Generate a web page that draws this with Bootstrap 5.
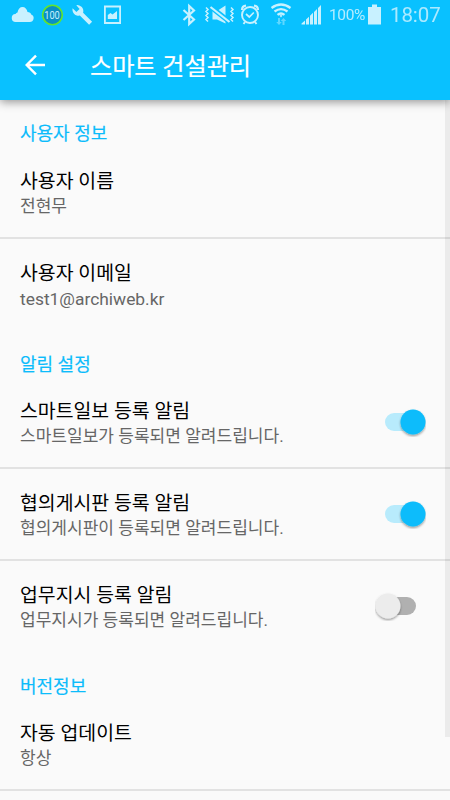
<!DOCTYPE html>
<html lang="ko">
<head>
<meta charset="utf-8">
<meta name="viewport" content="width=device-width, initial-scale=1">
<title>스마트 건설관리</title>
<link href="https://cdn.jsdelivr.net/npm/bootstrap@5.3.0/dist/css/bootstrap.min.css" rel="stylesheet">
<style>
  :root { --sky: #09c1ff; }
  body { font-family: Roboto, "Noto Sans CJK KR", sans-serif; background: #fafafa; height: 800px; line-height: 1; }
  .top-area { background: var(--sky); height: 100px; box-shadow: 0 2px 9px rgba(0,0,0,.42); z-index: 2; }
  .status-bar { height: 31px; color: #c8f1ff; }
  .status-bar svg { display: block; flex: none; }
  .status-text { white-space: nowrap; }
  .pct { font-size: 15.5px; width: 37px; letter-spacing: -.35px; opacity: .9; }
  .clock { font-size: 20.5px; letter-spacing: -.1px; opacity: .85; }
  .app-bar { height: 69px; }
  .app-title { font-size: 24.2px; font-weight: 400; letter-spacing: -.1px; padding-top: 5px; -webkit-text-stroke: .2px; }
  .section-label { height: 48px; padding: 23px 20px 0; font-size: 18px; line-height: 25px; font-weight: 400; color: #0cbcfb; -webkit-text-stroke: .2px; }
  .first-label { height: 47px; padding-top: 21px; }
  .pref { height: 90px; padding: 0 24px 0 20px; }
  .pref.divided { height: 92px; border-bottom: 2px solid #e2e2e2; }
  .pref-title { font-size: 19.4px; line-height: 26px; color: #000; margin-top: 22px; }
  .pref-sub { font-size: 17.05px; line-height: 22px; color: #666; }
  .pref-mail { font-size: 17.4px; line-height: 24px; }
  .toggle { width: 51px; height: 30px; }
  .scroll-thumb { right: 0; top: 100px; width: 5px; height: 637px; background: rgba(0,0,0,.06); z-index: 1; }
</style>
<script src="https://cdn.jsdelivr.net/npm/bootstrap@5.3.0/dist/js/bootstrap.bundle.min.js"></script>
</head>
<body class="overflow-hidden position-relative">
<svg width="0" height="0" class="position-absolute">
  <defs>
    <filter id="knob" x="-30%" y="-30%" width="160%" height="170%"><feDropShadow dx="0" dy="1.5" stdDeviation="1.1" flood-opacity=".4"/></filter>
    <symbol id="on" viewBox="0 0 51 30"><rect x="10" y="6" width="31" height="18" rx="9" fill="#b8ebfc"/><circle cx="38" cy="15" r="12.5" fill="#0abcfb" filter="url(#knob)"/></symbol>
    <symbol id="off" viewBox="0 0 51 30"><rect x="10" y="6" width="31" height="18" rx="9" fill="#b0b0b0"/><circle cx="13" cy="15" r="12.5" fill="#ececec" filter="url(#knob)"/></symbol>
  </defs>
</svg>
<header class="top-area position-relative">
  <div class="status-bar d-flex align-items-center">
      <svg width="329" height="31" viewBox="0 0 329 31" fill="currentColor">
        <path d="M16 22a4 4 0 0 1-.5-8 4 4 0 0 1 2-1.500C18 9 20 7 22.500 7s4.500 2 5 5c2 0 3.500 1 3.700 2.500A3.900 3.900 0 0 1 29.500 22z"/>
        <circle cx="52.500" cy="15" r="9.800" fill="#0b8fc4" stroke="#63e52c" stroke-width="1.600"/>
        <text x="52" y="18.900" font-size="11" text-anchor="middle" textLength="15.500" lengthAdjust="spacingAndGlyphs">100</text>
        <path d="M76.300 5.200a6 6 0 0 1 6.800 7.600l9 9-3 3-9.300-9.300a6 6 0 0 1-7.200-7.200l3.800 3.600 3.200-3z"/>
        <path fill-rule="evenodd" d="M104 5.500h17V24h-17zM105.800 7.500v14.500h13.400V7.500z"/>
        <path d="M107.800 19v-4l2.700-2 2 1.500 4.500-3.500V19z"/>
        <path d="M183.500 10l10.500 9.500-4.800 4.500V6l4.800 4.500L183.500 20" fill="none" stroke="currentColor" stroke-width="2.200"/>
        <path d="M212.500 11h4.500L225.500 5.500v18L217 19.500h-4.500z"/>
        <path d="M209.500 6l21 16.500" stroke="#09c1ff" stroke-width="5"/>
        <path d="M210.500 7l19 15" stroke="currentColor" stroke-width="2.200"/>
        <path d="M206 7.500l2 2-2 2 2 2-2 2 2 2-2 2 2 2M231 7.500l2 2-2 2 2 2-2 2 2 2-2 2 2 2" fill="none" stroke="currentColor" stroke-width="1.500"/>
        <g fill="none" stroke="currentColor">
          <circle cx="250" cy="15" r="8" stroke-width="1.900"/>
          <path d="M246 14l3.300 3 4.500-4.500" stroke-width="1.700"/>
          <path d="M242 10q0-4 4-4.300M258 10q0-4-4-4.300" stroke-width="2.200"/>
          <path d="M245 22l-1.500 2M255 22l1.500 2" stroke-width="2"/>
          <path d="M271.500 8q9.500-7 19 0M274.500 11.500q6.500-4.800 13 0M277.500 14.800q3.500-2.600 7 0" stroke-width="2.300"/>
        </g>
        <path d="M279.500 15.500q1.500-1 3 0l-1.500 2z"/>
        <g fill="currentColor" opacity=".45">
          <path d="M278 18h2v4h1.800l-2.800 3-2.800-3h1.800zM282.500 25h2v-4h1.800l-2.800-3-2.800 3h1.800z"/>
        </g>
        <path d="M301.500 24.500v-1l3.500-3v4zM306 24.500v-5l3-2.800v7.800zM310 24.500v-8.800l3-2.900v11.700z"/>
        <path d="M314 24.500V12l3-3v15.500zM318 24.500V8l3-3v19.500z"/>
      </svg>
      <span class="status-text pct">100%</span>
      <svg width="24" height="31" viewBox="366 0 24 31" fill="currentColor"><path d="M368 7h4V4.500h5V7h4v17.500h-13z"/></svg>
      <span class="status-text clock">18:07</span>
  </div>
  <div class="app-bar d-flex align-items-center text-white">
    <svg width="90" height="69" viewBox="0 31 90 69" fill="none" stroke="#fff" stroke-width="2.400"><path d="M45 65H27M36 55.700L26.700 65l9.300 9.300"/></svg>
    <h1 class="app-title m-0">스마트 건설관리</h1>
  </div>
</header>
<div class="scroll-thumb position-absolute"></div>
<main>
  <section>
    <h2 class="section-label first-label m-0">사용자 정보</h2>
    <div class="pref divided d-flex justify-content-between">
      <div><div class="pref-title">사용자 이름</div><div class="pref-sub">전현무</div></div>
    </div>
    <div class="pref d-flex justify-content-between">
      <div><div class="pref-title">사용자 이메일</div><div class="pref-sub pref-mail">test1@archiweb.kr</div></div>
    </div>
  </section>
  <section>
    <h2 class="section-label m-0">알림 설정</h2>
    <div class="pref divided d-flex justify-content-between">
      <div><div class="pref-title">스마트일보 등록 알림</div><div class="pref-sub">스마트일보가 등록되면 알려드립니다.</div></div>
      <svg class="toggle align-self-center"><use href="#on"/></svg>
    </div>
    <div class="pref divided d-flex justify-content-between">
      <div><div class="pref-title">협의게시판 등록 알림</div><div class="pref-sub">협의게시판이 등록되면 알려드립니다.</div></div>
      <svg class="toggle align-self-center"><use href="#on"/></svg>
    </div>
    <div class="pref d-flex justify-content-between">
      <div><div class="pref-title">업무지시 등록 알림</div><div class="pref-sub">업무지시가 등록되면 알려드립니다.</div></div>
      <svg class="toggle align-self-center"><use href="#off"/></svg>
    </div>
  </section>
  <section>
    <h2 class="section-label m-0">버전정보</h2>
    <div class="pref divided d-flex justify-content-between">
      <div><div class="pref-title">자동 업데이트</div><div class="pref-sub">항상</div></div>
    </div>
  </section>
</main>
</body>
</html>
